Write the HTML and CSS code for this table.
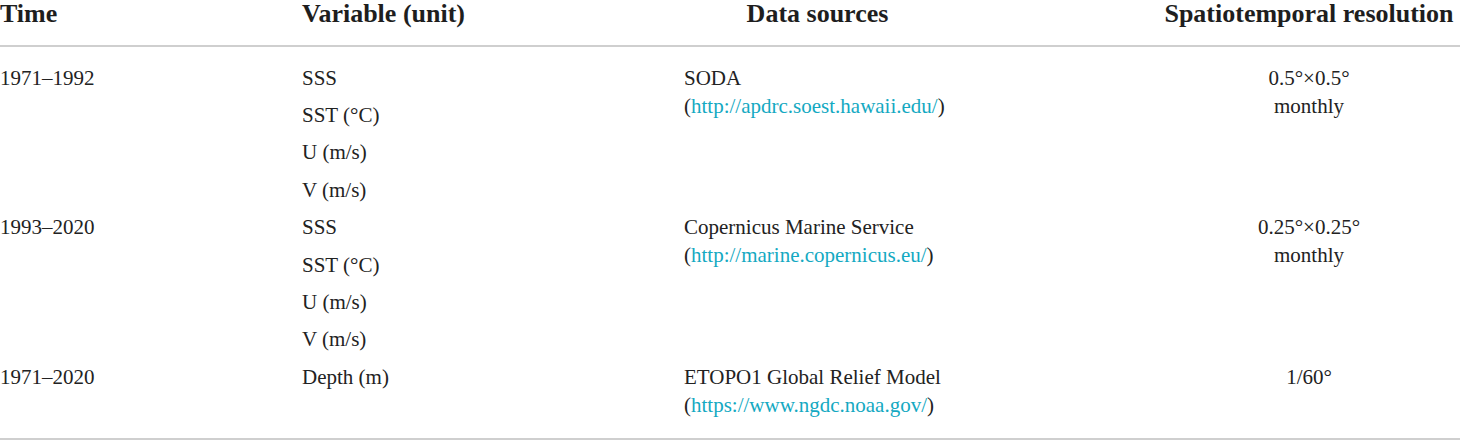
FILE: index.html
```html
<!DOCTYPE html>
<html lang="en">
<head>
<meta charset="utf-8">
<title>Data table</title>
<link rel="stylesheet" href="styles.css">
</head>
<body>
<div class="table">
  <div class="row head">
    <div class="cell">Time</div>
    <div class="cell">Variable (unit)</div>
    <div class="cell src-head">Data sources</div>
    <div class="cell res">Spatiotemporal resolution</div>
  </div>
  <div class="body">
    <div class="row group">
      <div class="cell top">1971–1992</div>
      <div class="cell vars">
        <div class="var">SSS</div>
        <div class="var">SST (°C)</div>
        <div class="var">U (m/s)</div>
        <div class="var">V (m/s)</div>
      </div>
      <div class="cell top">SODA<br>(<a href="#">http://apdrc.soest.hawaii.edu/</a>)</div>
      <div class="cell top res">0.5°×0.5°<br>monthly</div>
    </div>
    <div class="row group">
      <div class="cell top">1993–2020</div>
      <div class="cell vars">
        <div class="var">SSS</div>
        <div class="var">SST (°C)</div>
        <div class="var">U (m/s)</div>
        <div class="var">V (m/s)</div>
      </div>
      <div class="cell top">Copernicus Marine Service<br>(<a href="#">http://marine.copernicus.eu/</a>)</div>
      <div class="cell top res">0.25°×0.25°<br>monthly</div>
    </div>
    <div class="row group">
      <div class="cell top">1971–2020</div>
      <div class="cell vars">
        <div class="var">Depth (m)</div>
      </div>
      <div class="cell top">ETOPO1 Global Relief Model<br>(<a href="#">https://www.ngdc.noaa.gov/</a>)</div>
      <div class="cell top res">1/60°</div>
    </div>
  </div>
</div>
</body>
</html>
```

FILE: styles.css
```css
html, body {
  margin: 0;
  padding: 0;
  background: #ffffff;
}

body {
  font-family: "Liberation Serif", "Times New Roman", serif;
  color: #222222;
  width: 1460px;
  overflow: hidden;
}

.table {
  display: flex;
  flex-direction: column;
}

.row {
  display: grid;
  grid-template-columns: 302px 382px 474px 302px;
}

.head {
  font-weight: bold;
  font-size: 26px;
  line-height: 28px;
  padding-bottom: 17px;
  border-bottom: 2px solid #cfcfcf;
  color: #1e1e1e;
}

.head .cell {
  white-space: nowrap;
}

.src-head {
  text-align: center;
  padding-right: 207px;
}

.res {
  text-align: center;
}

.body {
  padding-top: 12px;
  padding-bottom: 19px;
  border-bottom: 2px solid #cfcfcf;
  font-size: 21px;
  line-height: 28px;
}

.top {
  padding-top: 4.7px;
}

.var {
  padding: 4.7px 0;
}

a {
  color: #14a9c2;
  text-decoration: none;
}
```
